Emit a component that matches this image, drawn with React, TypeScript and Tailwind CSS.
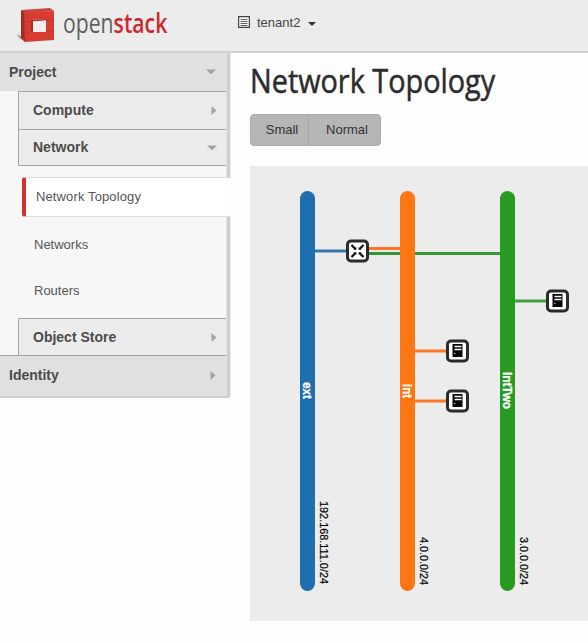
import React from 'react';

function Arrow({ down = false }: { down?: boolean }) {
  return down ? (
    <svg className="h-[6px] w-[10px]" viewBox="0 0 10 6"><path d="M0 0.5H10L5 5.5Z" fill="#a3a3a3" /></svg>
  ) : (
    <svg className="mr-[1px] h-[9px] w-[6px]" viewBox="0 0 6 9"><path d="M0.5 0V9L5.5 4.5Z" fill="#a3a3a3" /></svg>
  );
}

function Row({ label, down = false, className }: { label: string; down?: boolean; className: string }) {
  return (
    <div className={`flex items-center justify-between text-[14px] font-bold text-[#4c4c4c] ${className}`}>
      <span>{label}</span>
      <Arrow down={down} />
    </div>
  );
}

function Logo() {
  return (
    <div className="flex h-[51px] w-[180px]">
      <svg className="h-[51px] w-[63px] shrink-0" viewBox="0 0 63 51">
        <path d="M17 34L25 38V42L19 38Z" fill="#b9a3a4" />
        <path d="M21 10L50 8L54 11L24 14Z" fill="#c9473f" />
        <path d="M21 10L25 13V42L21 38Z" fill="#a52a25" />
        <path fillRule="evenodd" d="M24 13L54 11V40L25 42ZM31 20V32H46V19Z" fill="#d63c30" />
        <path d="M31 20L46 19V20.5L33 21.5V32H31Z" fill="#a92c27" />
        <path d="M33 21.5L46 20.5V31L33 32Z" fill="#f5eeee" />
        <path d="M24 22L31 21.5M47 20.5L54 20M24 32.5L31 32M47 31H54" stroke="#c0342c" strokeWidth="1" />
      </svg>
      <div className="flex h-[46px] w-max origin-left scale-x-[0.785] items-center font-['Open_Sans',sans-serif] text-[27px] leading-[46px]">
        <span className="text-[#606060]">open</span>
        <span className="font-semibold text-[#c92a30]">stack</span>
      </div>
    </div>
  );
}

function Server({ x, y }: { x: number; y: number }) {
  return (
    <g transform={`translate(${x} ${y})`}>
      <rect x="-10" y="-10" width="20" height="20" rx="3.5" fill="#fff" stroke="#2b2b2b" strokeWidth="3" />
      <path d="M-5 -7H5V6H-5Z" fill="#050505" />
      <path d="M-3 -4.5H4M-3 -1.5H4" stroke="#fff" strokeWidth="1.3" />
      <path d="M-3.5 2.5H-2" stroke="#aaa" />
    </g>
  );
}

const networks = [
  { x: 50, color: '#1f6fae', name: 'ext', start: 216, length: 17, cidr: '192.168.111.0/24', top: 335, size: 83 },
  { x: 150, color: '#ff7613', name: 'int', start: 218, length: 14, cidr: '4.0.0.0/24', top: 371, size: 48 },
  { x: 250, color: '#279a22', name: 'IntTwo', start: 206, length: 37, cidr: '3.0.0.0/24', top: 371, size: 48 },
];

function Topology() {
  return (
    <svg className="block h-[455px] w-[338px] bg-[#ececec]" viewBox="0 0 338 455" fontFamily="Liberation Sans, Arial, sans-serif">
      <g strokeWidth="3" fill="none">
        <path d="M64 85H98" stroke="#3c76a7" />
        <path d="M118 82.5H151" stroke="#ff7428" />
        <path d="M118 87.5H251" stroke="#359338" />
        <path d="M264 135H298" stroke="#45a044" />
        <path d="M164 185H198M164 235H198" stroke="#fb7628" />
      </g>
      {networks.map((n) => (
        <g key={n.name}>
          <rect x={n.x} y="25" width="15" height="400" rx="7.5" fill={n.color} />
          <text transform={`translate(${n.x + 3} ${n.start}) rotate(90)`} fill="#fff" stroke="#fff" strokeWidth="0.3" fontSize="12" fontWeight="bold" textLength={n.length} lengthAdjust="spacingAndGlyphs">{n.name}</text>
          <text transform={`translate(${n.x + 20} ${n.top}) rotate(90)`} fill="#000" stroke="#000" strokeWidth="0.2" fontSize="11" textLength={n.size} lengthAdjust="spacingAndGlyphs">{n.cidr}</text>
        </g>
      ))}
      <g transform="translate(107.5 85)">
        <rect x="-10" y="-10" width="20" height="20" rx="3.5" fill="#fff" stroke="#2b2b2b" strokeWidth="3" />
        <path d="M-6 -6L-2 -2M6 -6L2 -2M-6 6L-2 2M6 6L2 2" stroke="#111" strokeWidth="2.2" />
        <path d="M-4 -1.2H-1.2V-4ZM4 -1.2H1.2V-4ZM-4 1.2H-1.2V4ZM4 1.2H1.2V4Z" fill="#111" />
      </g>
      <Server x={307.5} y={135} />
      <Server x={207.5} y={185} />
      <Server x={207.5} y={235} />
    </svg>
  );
}

export default function App() {
  return (
    <div className="h-[643px] w-[588px] overflow-hidden bg-[#fdfdfd] font-['Liberation_Sans',Arial,sans-serif]">
      <header className="flex h-[53px] border-b-2 border-[#d0d0d0] bg-[#ececec]">
        <Logo />
        <div className="ml-[58px] flex h-[44px] items-center text-[13px] text-[#444]">
          <svg className="h-[12px] w-[12px]" viewBox="0 0 12 12"><path d="M.6 .6H11.4V11.4H.6Z" fill="#f5f5f5" stroke="#444" strokeWidth="1.2" /><path d="M2.5 3.5H9.5M2.5 5.5H9.5M2.5 7.5H9.5M2.5 9.5H9.5" stroke="#666" /></svg>
          <span className="mt-px ml-[7px]">tenant2</span>
          <svg className="mt-[4px] ml-2 h-[4px] w-[8px]" viewBox="0 0 8 4"><path d="M0 0H8L4 4Z" fill="#333" /></svg>
        </div>
      </header>
      <div className="flex items-start">
        <nav className="h-[345px] w-[231px] shrink-0 rounded-br-[4px] border-b-2 border-[#cfcfcf] bg-[linear-gradient(to_right,#f7f7f7_226px,#e4e4e4_226px,#e4e4e4_227px,#cecece_227px,#cecece_230px,#eeeeee_230px)]">
          <Row label="Project" down className="h-[38px] w-[226px] bg-[#e0e0e0] pr-[10px] pl-[9px]" />
          <div className="ml-[18px] w-[208px] border-l border-[#a5a5a5]">
            <Row label="Compute" className="h-[38px] border-t border-[#a5a5a5] bg-[#ececec] pr-[8px] pl-[14px]" />
            <Row label="Network" down className="h-[37px] border-y border-[#a5a5a5] bg-[#ececec] pr-[9px] pl-[14px]" />
          </div>
          <div className="h-[152px] pt-[11px] text-[13px] text-[#555]">
            <div className="ml-[22px] flex h-[40px] w-[209px] items-center rounded-l-[3px] border-y border-l-4 border-y-[#dddddd] border-l-[#d4302e] bg-white pl-[10px] tracking-[0.12px]">Network Topology</div>
            <div className="flex h-[56px] items-center pl-[34px]">Networks</div>
            <div className="flex h-[36px] items-center pl-[34px]">Routers</div>
          </div>
          <Row label="Object Store" className="ml-[18px] h-[37px] w-[208px] border-t border-l border-[#a5a5a5] bg-[#ececec] pr-[8px] pl-[14px]" />
          <Row label="Identity" className="h-[41px] w-[226px] border-t border-[#a5a5a5] bg-[#e0e0e0] pr-[9px] pb-[2px] pl-[9px]" />
        </nav>
        <main className="ml-[19px] w-[338px] pt-[7px]">
          <h1 className="h-[42px] w-max origin-left scale-x-[0.901] whitespace-nowrap font-['Open_Sans',sans-serif] text-[32px] font-medium leading-[42px] text-[#2c2c2c] [-webkit-text-stroke:0.5px_#2c2c2c]">Network Topology</h1>
          <div className="mt-3 mb-5 flex h-[32px] w-[131px] overflow-hidden rounded-[4px] border border-[#aaa] bg-[#b6b6b6] text-[13px] text-[#333]">
            <button className="w-[58px] border-r border-[#a5a5a5] pl-[5px]">Small</button>
            <button className="flex-1 pl-[5px]">Normal</button>
          </div>
          <Topology />
        </main>
      </div>
    </div>
  );
}
